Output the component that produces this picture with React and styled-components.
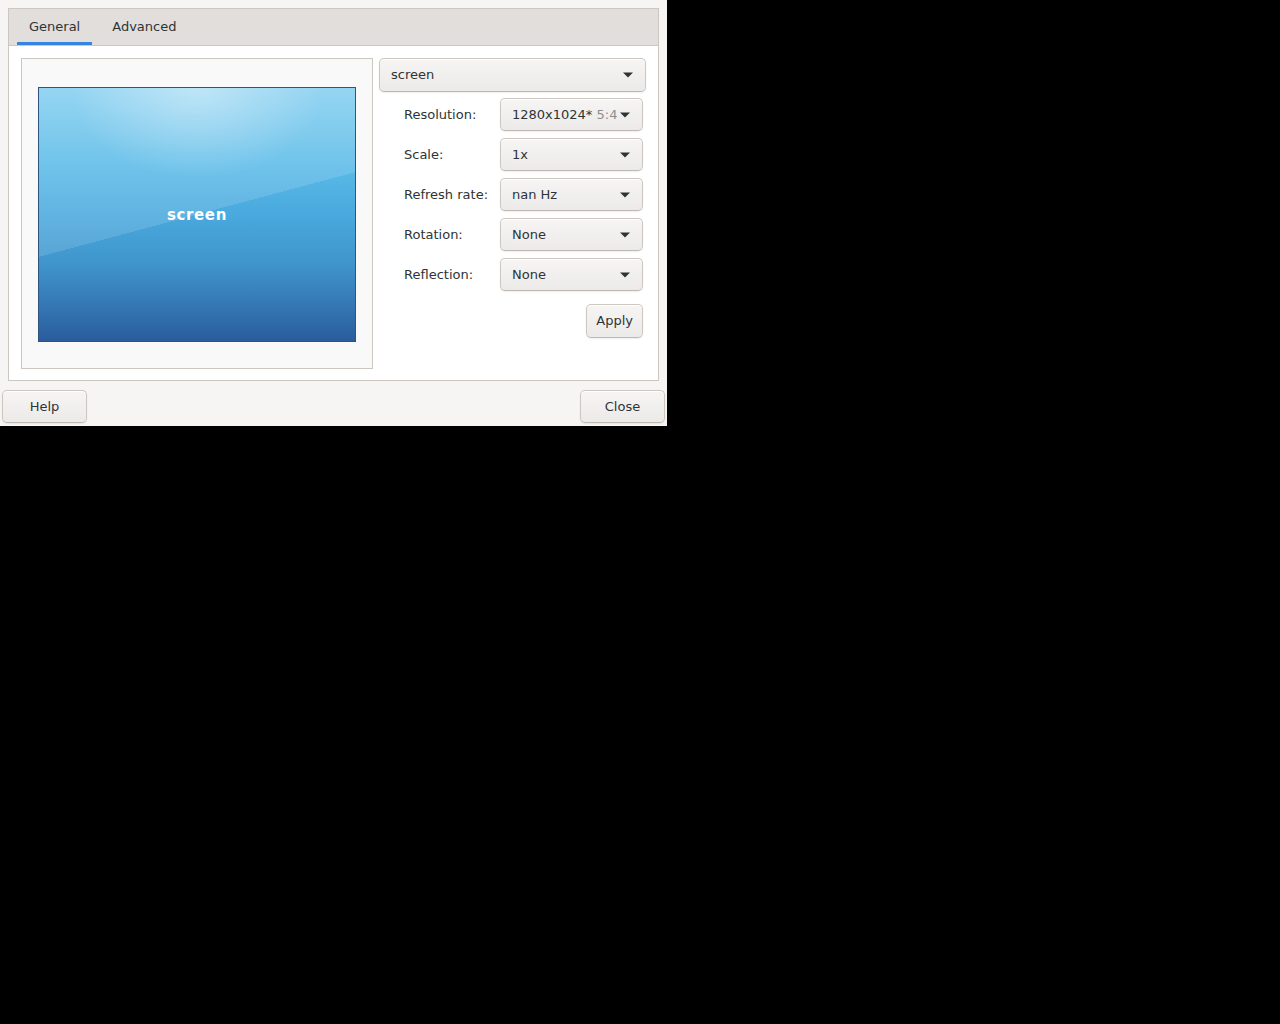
import React from "react"
import styled, {createGlobalStyle} from "styled-components"

const GlobalStyle = createGlobalStyle`
    html, body {
        margin: 0;
        background: #000;
    }
    body {
        font-family: "DejaVu Sans", "Noto Sans", sans-serif;
        font-size: 13px;
        color: #2e3436;
    }
`

const Window = styled.div`
    width: 667px;
    height: 426px;
    background: #f6f5f4;
    display: flex;
    flex-direction: column;
    box-sizing: border-box;
    overflow: hidden;
`

const Notebook = styled.div`
    margin: 8px 8px 0 8px;
    width: 651px;
    height: 373px;
    box-sizing: border-box;
    border: 1px solid #cdc7c2;
    display: flex;
    flex-direction: column;
    background: #fff;
`

const TabBar = styled.div`
    height: 36px;
    background: #e1dedb;
    border-bottom: 1px solid #cdc7c2;
    display: flex;
    gap: 8px;
    padding-left: 8px;
`

const Tab = styled.div`
    padding: 2px 12px 0 12px;
    display: flex;
    align-items: center;
    box-sizing: border-box;
    border-bottom: 3px solid ${p => p.active ? "#3584e4" : "transparent"};
    color: #2e3436;
    height: 36px;
`

const Page = styled.div`
    flex: 1;
    display: flex;
    gap: 6px;
    padding: 12px;
`

const PreviewFrame = styled.div`
    width: 352px;
    height: 311px;
    box-sizing: border-box;
    border: 1px solid #cdc7c2;
    background: #f9f9f9;
    padding: 28px 16px 26px 16px;
`

const ScreenPreview = styled.div`
    width: 318px;
    height: 255px;
    box-sizing: border-box;
    border: 1px solid #2f5482;
    display: flex;
    align-items: center;
    justify-content: center;
    color: #fff;
    font-weight: bold;
    font-size: 15px;
    letter-spacing: 0.6px;
    background:
        radial-gradient(ellipse 40% 36% at 50% 0%, rgba(255,255,255,0.4), rgba(255,255,255,0) 100%),
        linear-gradient(165deg, rgba(255,255,255,0.13) 0 50%, rgba(255,255,255,0) 50%),
        linear-gradient(to bottom, #86cff0 0%, #5bbbe8 30%, #48a7dc 52%, #3f94cb 70%, #3477b4 86%, #2b5c9c 100%);
`

const Settings = styled.div`
    flex: 1;
    display: flex;
    flex-direction: column;
`

const Combo = styled.div`
    height: ${p => p.tall ? "34px" : "33px"};
    box-sizing: border-box;
    border: 1px solid #cdc7c2;
    border-bottom-color: #bfb8b1;
    border-radius: 5px;
    background: linear-gradient(to top, #edebe9 2px, #f6f5f4);
    box-shadow: inset 0 1px #fff, 0 1px 2px rgba(0,0,0,0.07);
    display: flex;
    align-items: center;
    padding: 0 9px 0 11px;
`

const ComboText = styled.span`
    flex: 1;
    white-space: nowrap;
    overflow: hidden;
    margin-top: -1px;
`

const Dim = styled.span`
    color: #8b8e8f;
`

const FormGrid = styled.div`
    display: grid;
    grid-template-columns: 96px 143px;
    row-gap: 7px;
    margin-top: 6px;
    padding-left: 25px;
`

const Label = styled.div`
    display: flex;
    align-items: center;
`

const ApplyRow = styled.div`
    display: flex;
    justify-content: flex-end;
    padding-right: 3px;
    margin-top: 13px;
`

const Button = styled.div`
    height: ${p => p.h || "34px"};
    width: ${p => p.w || "auto"};
    box-sizing: border-box;
    padding: 0 9px 1px 9px;
    border: 1px solid #cdc7c2;
    border-bottom-color: #bfb8b1;
    border-radius: 5px;
    background: linear-gradient(to top, #edebe9 2px, #f6f5f4);
    box-shadow: inset 0 1px #fff, 0 1px 2px rgba(0,0,0,0.07);
    display: flex;
    align-items: center;
    justify-content: center;
`

const ButtonBar = styled.div`
    display: flex;
    justify-content: space-between;
    padding: 0 2px;
    margin-top: 9px;
`

function Arrow(){
    return(
        <svg width="16" height="16" viewBox="0 0 16 16">
            <path d="M3 5.5 L13 5.5 L8 10.5 Z" fill="#2e3436"/>
        </svg>
    )
}

const rows = [
    {label: "Resolution:", value: "1280x1024*", dim: " 5:4"},
    {label: "Scale:", value: "1x"},
    {label: "Refresh rate:", value: "nan Hz"},
    {label: "Rotation:", value: "None"},
    {label: "Reflection:", value: "None"},
]

export default function App(){
    return(
        <Window>
            <GlobalStyle/>
            <Notebook>
                <TabBar>
                    <Tab active>General</Tab>
                    <Tab>Advanced</Tab>
                </TabBar>
                <Page>
                    <PreviewFrame>
                        <ScreenPreview>screen</ScreenPreview>
                    </PreviewFrame>
                    <Settings>
                        <Combo tall>
                            <ComboText>screen</ComboText>
                            <Arrow/>
                        </Combo>
                        <FormGrid>
                            {rows.map((row) => (
                                <React.Fragment key={row.label}>
                                    <Label>{row.label}</Label>
                                    <Combo>
                                        <ComboText>
                                            {row.value}
                                            {row.dim ? <Dim>{row.dim}</Dim> : null}
                                        </ComboText>
                                        <Arrow/>
                                    </Combo>
                                </React.Fragment>
                            ))}
                        </FormGrid>
                        <ApplyRow>
                            <Button>Apply</Button>
                        </ApplyRow>
                    </Settings>
                </Page>
            </Notebook>
            <ButtonBar>
                <Button w="85px" h="33px">Help</Button>
                <Button w="85px" h="33px">Close</Button>
            </ButtonBar>
        </Window>
    )
}
